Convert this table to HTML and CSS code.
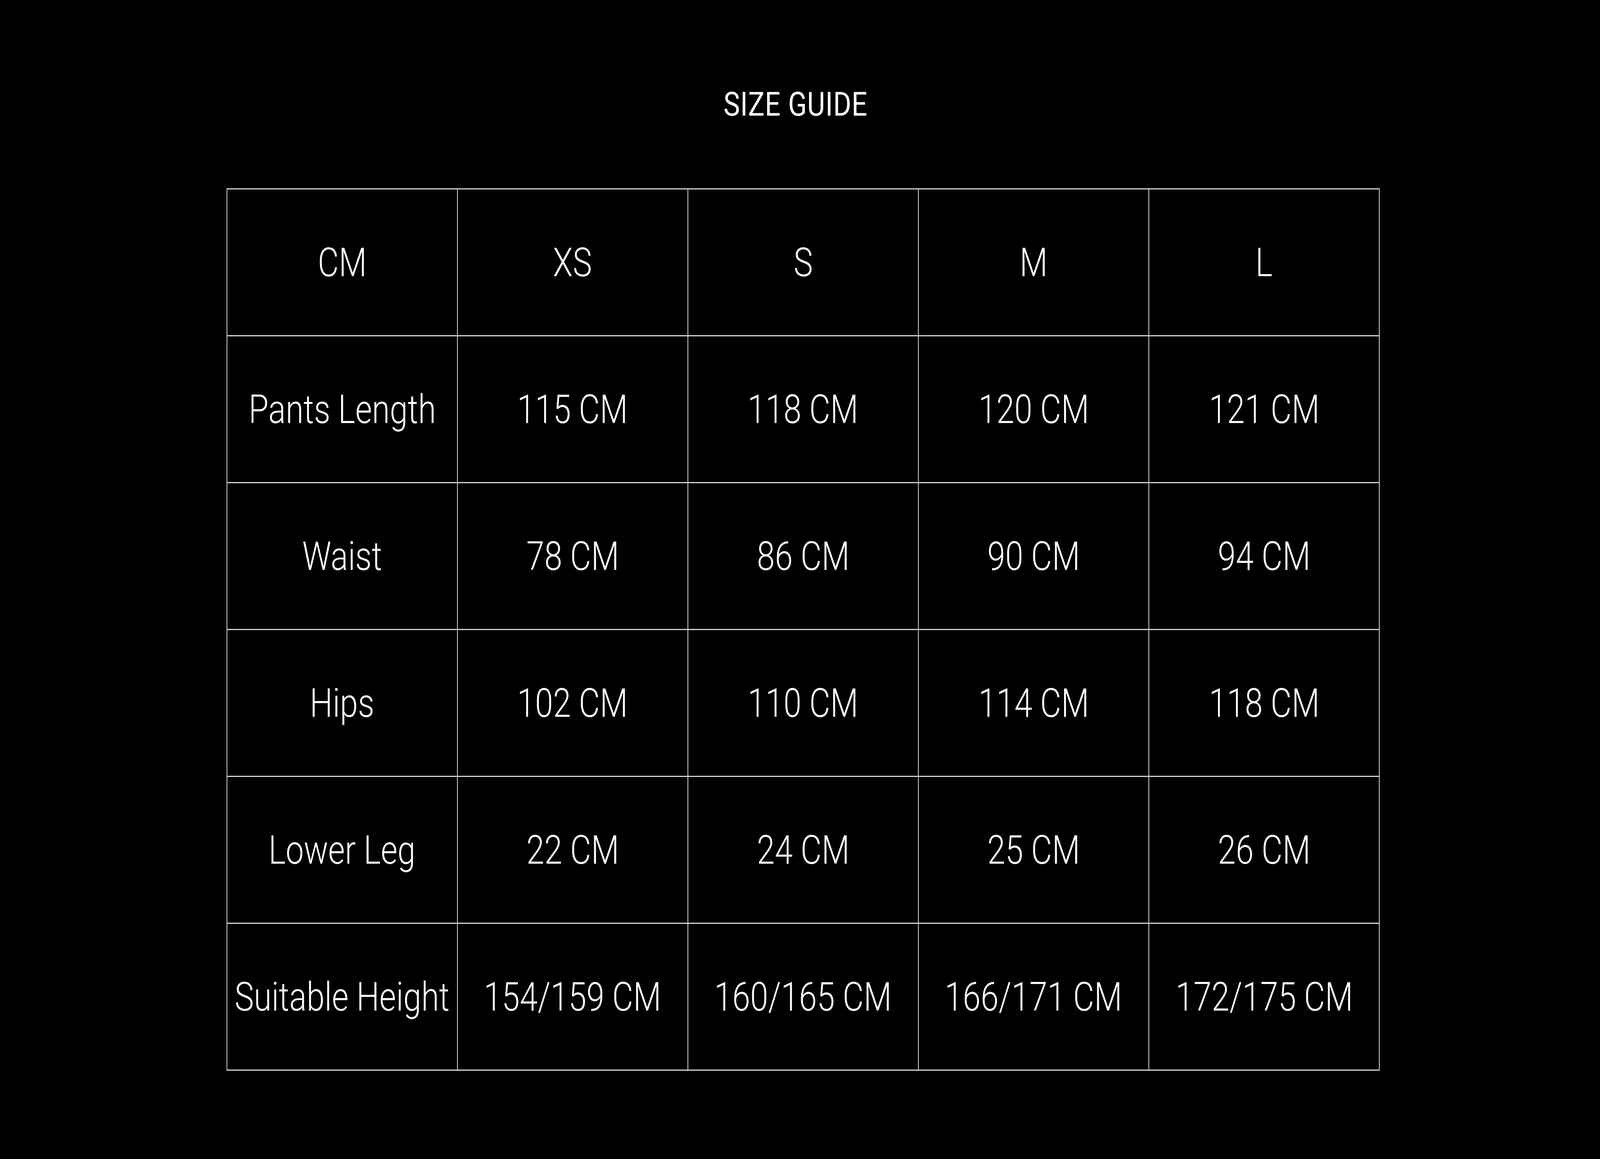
FILE: index.html
```html
<!DOCTYPE html>
<html lang="en">
<head>
<meta charset="utf-8">
<title>Size Guide</title>
<link rel="stylesheet" href="styles.css">
</head>
<body>
<main class="page">
  <h1 class="title"><span class="wide">SIZE GUIDE</span></h1>
  <table class="size-table">
    <tbody>
      <tr>
        <td><div class="cell"><span class="wide">CM</span></div></td>
        <td><div class="cell"><span class="wide">XS</span></div></td>
        <td><div class="cell"><span class="wide">S</span></div></td>
        <td><div class="cell"><span class="wide">M</span></div></td>
        <td><div class="cell"><span class="wide">L</span></div></td>
      </tr>
      <tr>
        <td><div class="cell"><span class="wide">Pants Length</span></div></td>
        <td><div class="cell"><span class="wide">115 CM</span></div></td>
        <td><div class="cell"><span class="wide">118 CM</span></div></td>
        <td><div class="cell"><span class="wide">120 CM</span></div></td>
        <td><div class="cell"><span class="wide">121 CM</span></div></td>
      </tr>
      <tr>
        <td><div class="cell"><span class="wide">Waist</span></div></td>
        <td><div class="cell"><span class="wide">78 CM</span></div></td>
        <td><div class="cell"><span class="wide">86 CM</span></div></td>
        <td><div class="cell"><span class="wide">90 CM</span></div></td>
        <td><div class="cell"><span class="wide">94 CM</span></div></td>
      </tr>
      <tr>
        <td><div class="cell"><span class="wide">Hips</span></div></td>
        <td><div class="cell"><span class="wide">102 CM</span></div></td>
        <td><div class="cell"><span class="wide">110 CM</span></div></td>
        <td><div class="cell"><span class="wide">114 CM</span></div></td>
        <td><div class="cell"><span class="wide">118 CM</span></div></td>
      </tr>
      <tr>
        <td><div class="cell"><span class="wide">Lower Leg</span></div></td>
        <td><div class="cell"><span class="wide">22 CM</span></div></td>
        <td><div class="cell"><span class="wide">24 CM</span></div></td>
        <td><div class="cell"><span class="wide">25 CM</span></div></td>
        <td><div class="cell"><span class="wide">26 CM</span></div></td>
      </tr>
      <tr>
        <td><div class="cell"><span class="wide">Suitable Height</span></div></td>
        <td><div class="cell"><span class="wide">154/159 CM</span></div></td>
        <td><div class="cell"><span class="wide">160/165 CM</span></div></td>
        <td><div class="cell"><span class="wide">166/171 CM</span></div></td>
        <td><div class="cell"><span class="wide">172/175 CM</span></div></td>
      </tr>
    </tbody>
  </table>
</main>
</body>
</html>
```

FILE: styles.css
```css
html, body {
  margin: 0;
  padding: 0;
  background: #000;
}

body {
  min-height: 2967px;
  color: #fff;
  font-family: Roboto, "Liberation Sans", Arial, sans-serif;
  overflow: hidden;
}

.page {
  display: flex;
  flex-direction: column;
  align-items: flex-start;
  padding-top: 224px;
}

.title {
  align-self: stretch;
  margin: 0 0 172px 0;
  padding-right: 0.56vw;
  text-align: center;
  font-size: 86px;
  line-height: 1;
  font-weight: 400;
  letter-spacing: 1px;
}

.wide {
  display: inline-block;
  flex: none;
  white-space: nowrap;
  transform-origin: center;
}

.title .wide {
  transform: scaleX(0.821);
}

.size-table {
  margin-left: 14.154vw;
  width: 72.036vw;
  border-collapse: collapse;
  table-layout: fixed;
}

.size-table td {
  width: 14.407vw;
  height: 376px;
  box-sizing: border-box;
  border-style: solid;
  border-color: #d4d4d4;
  border-width: 3px 2px;
  padding: 0;
  vertical-align: middle;
  font-size: 102px;
  line-height: 1;
  font-weight: 300;
}

.cell {
  display: flex;
  justify-content: center;
  align-items: center;
  width: 100%;
}

.cell .wide {
  transform: scaleX(0.812);
}
```
